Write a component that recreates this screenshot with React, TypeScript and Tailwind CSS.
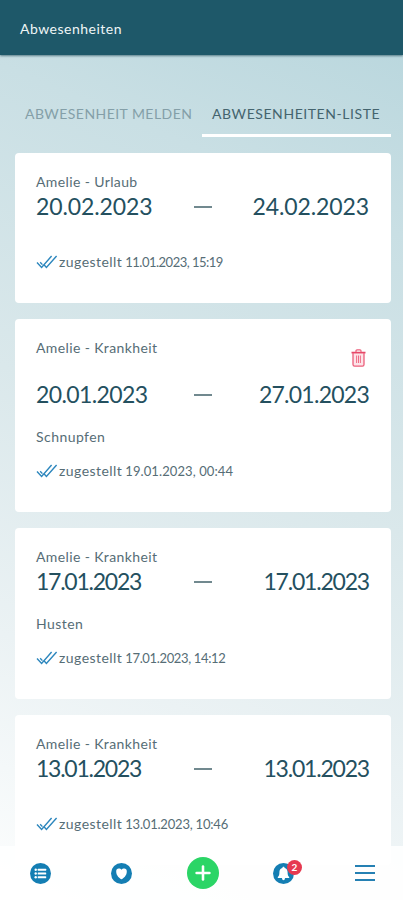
import { Plus } from 'lucide-react';

interface Absence {
  id: string;
  title: string;
  from: string;
  to: string;
  fromClass: string;
  toClass: string;
  note?: string;
  delivered: string;
  deliveredClass: string;
  deletable?: boolean;
}

const absences: Absence[] = [
  {
    id: '1',
    title: 'Amelie - Urlaub',
    from: '20.02.2023',
    fromClass: 'tracking-[-0.1px]',
    to: '24.02.2023',
    toClass: 'tracking-[-0.1px]',
    delivered: '11.01.2023, 15:19',
    deliveredClass: 'tracking-[-0.5px]',
  },
  {
    id: '2',
    title: 'Amelie - Krankheit',
    from: '20.01.2023',
    fromClass: 'tracking-[-0.6px]',
    to: '27.01.2023',
    toClass: 'tracking-[-0.75px]',
    note: 'Schnupfen',
    delivered: '19.01.2023, 00:44',
    deliveredClass: 'tracking-[0.1px]',
    deletable: true,
  },
  {
    id: '3',
    title: 'Amelie - Krankheit',
    from: '17.01.2023',
    fromClass: 'tracking-[-1.25px]',
    to: '17.01.2023',
    toClass: 'tracking-[-1.2px]',
    note: 'Husten',
    delivered: '17.01.2023, 14:12',
    deliveredClass: 'tracking-[-0.35px]',
  },
  {
    id: '4',
    title: 'Amelie - Krankheit',
    from: '13.01.2023',
    fromClass: 'tracking-[-1.25px]',
    to: '13.01.2023',
    toClass: 'tracking-[-1.2px]',
    delivered: '13.01.2023, 10:46',
    deliveredClass: 'tracking-[-0.2px]',
  },
];

function DoubleCheck() {
  return (
    <svg className="h-[14px] w-[22px] shrink-0" viewBox="0 0 22 14" fill="none" stroke="#2c86bd" strokeWidth="1.4">
      <path d="M1 7.6 L5.6 12.4 L15.6 1" />
      <path d="M8 9.8 L10.4 12.4 L20.6 1" />
      <path d="M4.2 7.2 L6.4 9.6" />
    </svg>
  );
}

function TrashIcon() {
  return (
    <svg className="h-[18px] w-[15px]" viewBox="0 0 15 18">
      <path d="M2 4 H13 V15.6 Q13 17.2 11.4 17.2 H3.6 Q2 17.2 2 15.6 Z" fill="#fde3e8" />
      <g fill="none" stroke="#ec5f7b">
        <path d="M0.5 3.6 H14.5" strokeWidth="1.7" stroke="#e64767" />
        <path d="M5 3 V1.8 Q5 0.8 6 0.8 H9 Q10 0.8 10 1.8 V3" strokeWidth="1.2" />
        <path d="M2 4 V15.6 Q2 17.2 3.6 17.2 H11.4 Q13 17.2 13 15.6 V4" strokeWidth="1.3" />
        <path d="M5.6 6.5 V14 M7.5 6.5 V14 M9.4 6.5 V14" strokeWidth="0.9" />
      </g>
    </svg>
  );
}

function ListIcon() {
  return (
    <svg className="h-[21px] w-[21px]" viewBox="0 0 21 21">
      <circle cx="10.5" cy="10.5" r="10.5" fill="#147eb3" />
      <g fill="#fff">
        <circle cx="5.7" cy="6.7" r="1.2" />
        <circle cx="5.7" cy="10.5" r="1.2" />
        <circle cx="5.7" cy="14.3" r="1.2" />
        <rect x="7.7" y="5.7" width="8.5" height="2" rx="0.5" />
        <rect x="7.7" y="9.5" width="8.5" height="2" rx="0.5" />
        <rect x="7.7" y="13.3" width="8.5" height="2" rx="0.5" />
      </g>
    </svg>
  );
}

function HeartIcon() {
  return (
    <svg className="h-[21px] w-[21px]" viewBox="0 0 21 21">
      <circle cx="10.5" cy="10.5" r="10.5" fill="#147eb3" />
      <path
        d="M10.5 16.2 C8.6 15.4 5.2 12.6 5.2 8.4 C5.2 6.6 6.2 5.6 7.7 5.6 C9 5.6 10 6.1 10.5 6.8 C11 6.1 12 5.6 13.3 5.6 C14.8 5.6 15.8 6.6 15.8 8.4 C15.8 12.6 12.4 15.4 10.5 16.2 Z"
        fill="#fff"
      />
    </svg>
  );
}

function BellIcon() {
  return (
    <svg className="h-[21px] w-[21px]" viewBox="0 0 21 21">
      <circle cx="10.5" cy="10.5" r="10.5" fill="#147eb3" />
      <path
        d="M10.5 3.8 C11.2 3.8 11.6 4.3 11.6 4.9 C13.7 5.5 14.6 7 14.6 9.2 C14.6 11.8 15 12.9 16.2 14.1 V15 H4.8 V14.1 C6 12.9 6.4 11.8 6.4 9.2 C6.4 7 7.3 5.5 9.4 4.9 C9.4 4.3 9.8 3.8 10.5 3.8 Z"
        fill="#fff"
      />
      <path d="M8.9 15 H12.1 Q11.8 17.2 10.5 17.2 Q9.2 17.2 8.9 15 Z" fill="#fff" />
    </svg>
  );
}

function AbsenceCard({ absence }: { absence: Absence }) {
  return (
    <div className="rounded-[4px] bg-white px-[21px] pt-[19px] pb-[31px] text-sm leading-5 text-[#566d76]">
      <div className={`flex justify-between ${absence.deletable ? 'h-[42px]' : 'h-[20px]'}`}>
        <span className="tracking-[0.38px]">{absence.title}</span>
        {absence.deletable && (
          <button className="mt-[11px] mr-[4px] h-[18px]">
            <TrashIcon />
          </button>
        )}
      </div>
      <div className="grid h-7 grid-cols-[1fr_18px_1fr] items-center text-[23px] leading-7 text-[#24505f]">
        <span className={absence.fromClass}>{absence.from}</span>
        <span className="mt-px h-[2px] bg-[#71898f]" />
        <span className={`pr-px text-right ${absence.toClass}`}>{absence.to}</span>
      </div>
      {absence.note && <p className="mt-[19px] -mb-[18px] tracking-[0.45px]">{absence.note}</p>}
      <div className="mt-[32px] flex items-center">
        <DoubleCheck />
        <span className="ml-px tracking-[0.45px]">zugestellt</span>
        <span className={`ml-[3px] text-[13px] ${absence.deliveredClass}`}>{absence.delivered}</span>
      </div>
    </div>
  );
}

function App() {
  return (
    <div className="relative flex h-[900px] w-full flex-col overflow-hidden bg-[linear-gradient(203deg,#b6d5dc_0%,#c9dfe4_22%,#dae8eb_50%,#ebf2f4_75%,#fdfefe_100%)] font-[Lato,sans-serif]">
      <header className="z-10 flex h-[55px] shrink-0 items-center bg-[#1e5869] px-5 pt-[2px] shadow-[0_1px_2px_rgba(15,60,75,0.6)]">
        <h1 className="text-sm leading-5 tracking-[0.5px] text-[#eef5f6]">Abwesenheiten</h1>
      </header>

      <div className="mt-[37px] ml-[15px] flex h-[45px] w-[376px] shrink-0 text-sm">
        <button className="w-[187px] border-b-[3px] border-transparent pt-[2px] pl-[10px] text-left whitespace-nowrap tracking-[0.45px] text-[#849fa8]">
          ABWESENHEIT MELDEN
        </button>
        <button className="w-[189px] border-b-[3px] border-white pt-[2px] pl-[10px] text-left whitespace-nowrap tracking-[0.57px] text-[#44646e]">
          ABWESENHEITEN-LISTE
        </button>
      </div>

      <main className="mt-4 ml-[15px] flex w-[376px] flex-col gap-4">
        {absences.map((absence) => (
          <AbsenceCard key={absence.id} absence={absence} />
        ))}
      </main>

      <nav className="absolute inset-x-0 bottom-0 flex h-[54px] items-center bg-white/90">
        <button className="flex w-[81px] shrink-0 justify-center">
          <ListIcon />
        </button>
        <button className="flex w-[81px] shrink-0 justify-center">
          <HeartIcon />
        </button>
        <button className="flex w-[81px] shrink-0 justify-center">
          <span className="flex h-8 w-8 items-center justify-center rounded-full bg-[#2bd566]">
            <Plus className="h-[22px] w-[22px] text-white" strokeWidth={2.8} />
          </span>
        </button>
        <button className="flex w-[81px] shrink-0 justify-center">
          <span className="relative">
            <BellIcon />
            <span className="absolute -top-[3px] left-[14px] h-[15px] w-[15px] rounded-full bg-[#e63950] text-center text-[10px] leading-[15px] font-bold text-white">
              2
            </span>
          </span>
        </button>
        <button className="flex w-[81px] shrink-0 justify-center">
          <span className="flex w-5 flex-col gap-[5px]">
            <span className="h-[2px] bg-[#2580b3]" />
            <span className="h-[2px] bg-[#2580b3]" />
            <span className="h-[2px] bg-[#2580b3]" />
          </span>
        </button>
      </nav>
    </div>
  );
}

export default App;
